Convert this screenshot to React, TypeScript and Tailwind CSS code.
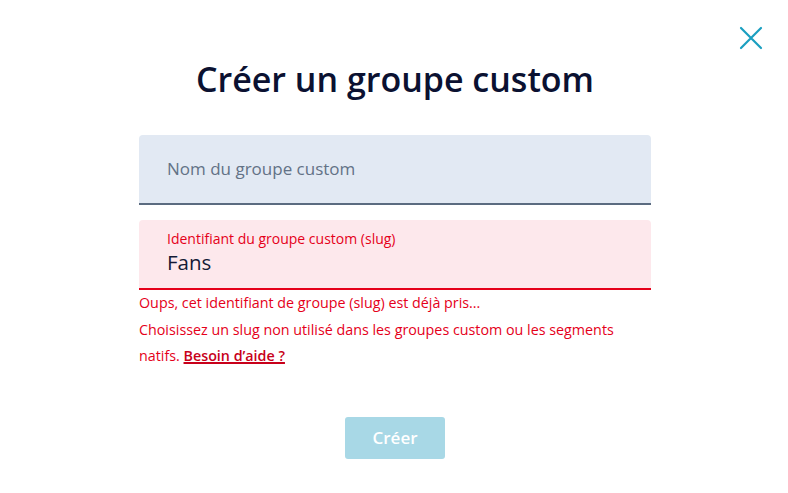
export default function App() {
	return (
		<div className="relative min-h-[493px] w-full bg-white font-['Open_Sans',sans-serif]">
			<button className="absolute right-[25px] top-[26px] text-[#1a9fc0]" aria-label="Fermer">
				<svg width="24" height="24" viewBox="0 0 24 24" fill="none" stroke="currentColor" strokeWidth="2.2" strokeLinecap="round">
					<path d="M2 2 L22 22 M22 2 L2 22" />
				</svg>
			</button>
			<div className="ml-[139px] flex w-[512px] flex-col pt-[57px]">
				<h1 className="text-center text-[34px] font-semibold leading-[44px] text-[#0b1131]">Créer un groupe custom</h1>
				<div className="mt-[34px] flex h-[70px] items-center rounded-t-[4px] border-b-2 border-[#5b6b80] bg-[#e2e9f3] px-[28px]">
					<span className="text-[17px] text-[#637286]">Nom du groupe custom</span>
				</div>
				<div className="mt-[15px] flex h-[70px] flex-col justify-center rounded-t-[4px] border-b-2 border-[#e5001a] bg-[#fde8ec] px-[28px] pb-[4px]">
					<span className="text-[14px] leading-[20px] text-[#e5001a]">Identifiant du groupe custom (slug)</span>
					<span className="text-[20.5px] leading-[27px] text-[#141a36]">Fans</span>
				</div>
				<div className="pr-[30px] text-[14.3px] leading-[26.5px] text-[#e5001a]">
					<p>Oups, cet identifiant de groupe (slug) est déjà pris...</p>
					<p>
						Choisissez un slug non utilisé dans les groupes custom ou les segments natifs.{" "}
						<a href="#" className="font-semibold text-[#c8001a] underline decoration-2">Besoin d’aide ?</a>
					</p>
				</div>
				<div className="mt-[47px] flex justify-center">
					<button className="h-[42px] w-[100px] rounded-[3px] bg-[#a8d8e6] text-[17px] font-semibold text-white">Créer</button>
				</div>
			</div>
		</div>
	);
}
